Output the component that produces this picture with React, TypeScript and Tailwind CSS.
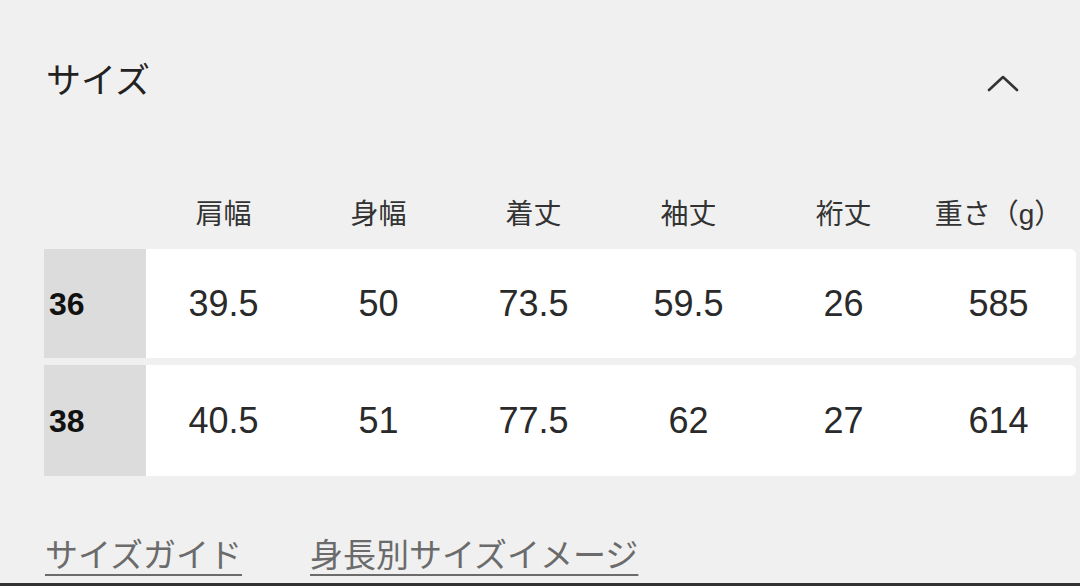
const columns = ["肩幅", "身幅", "着丈", "袖丈", "裄丈", "重さ（g）"];

const rows = [
  { size: "36", values: ["39.5", "50", "73.5", "59.5", "26", "585"], height: "h-[109px]" },
  { size: "38", values: ["40.5", "51", "77.5", "62", "27", "614"], height: "h-[111px]" },
];

export default function App() {
  return (
    <div
      className="flex h-[586px] w-[1080px] flex-col overflow-hidden bg-[#f0f0f0] text-[#222]"
      style={{ fontFamily: '"Liberation Sans", "Noto Sans CJK JP", sans-serif' }}
    >
      {/* section title */}
      <div className="flex h-[160px] items-center justify-between pl-[46px] pr-[60px]">
        <h2 className="text-[35px] leading-none">サイズ</h2>
        <svg width="34" height="20" viewBox="0 0 34 20" fill="none" className="mt-[6px]">
          <path d="M3 17 L17 4 L31 17" stroke="#333" strokeWidth="2.6" strokeLinecap="round" strokeLinejoin="round" />
        </svg>
      </div>

      {/* column headings */}
      <div className="mt-[25px] flex h-[60px] items-center pl-[146px]">
        {columns.map((c) => (
          <div key={c} className="w-[155px] text-center text-[28px] leading-none text-[#333]">
            {c}
          </div>
        ))}
      </div>

      {/* size rows */}
      <div className="mt-[4px] flex flex-col gap-[7px] pl-[44px] pr-[4px]">
        {rows.map((r) => (
          <div key={r.size} className={`flex ${r.height}`}>
            <div className="flex w-[102px] items-center bg-[#dcdcdc] pl-[5px] text-[32px] font-bold text-[#111]">
              {r.size}
            </div>
            <div className="flex flex-1 items-center rounded-r-md bg-white">
              {r.values.map((v, i) => (
                <div key={i} className="w-[155px] text-center text-[36px] leading-none text-[#2a2a2a]">
                  {v}
                </div>
              ))}
            </div>
          </div>
        ))}
      </div>

      {/* links */}
      <div className="mt-[60px] flex gap-[68px] pl-[45px] text-[33px] leading-[40px] text-[#6b6b6b]">
        <a className="underline decoration-2 underline-offset-[7px]">サイズガイド</a>
        <a className="underline decoration-2 underline-offset-[7px]">身長別サイズイメージ</a>
      </div>

      <div className="mt-auto h-[3px] bg-[#333]" />
    </div>
  );
}
